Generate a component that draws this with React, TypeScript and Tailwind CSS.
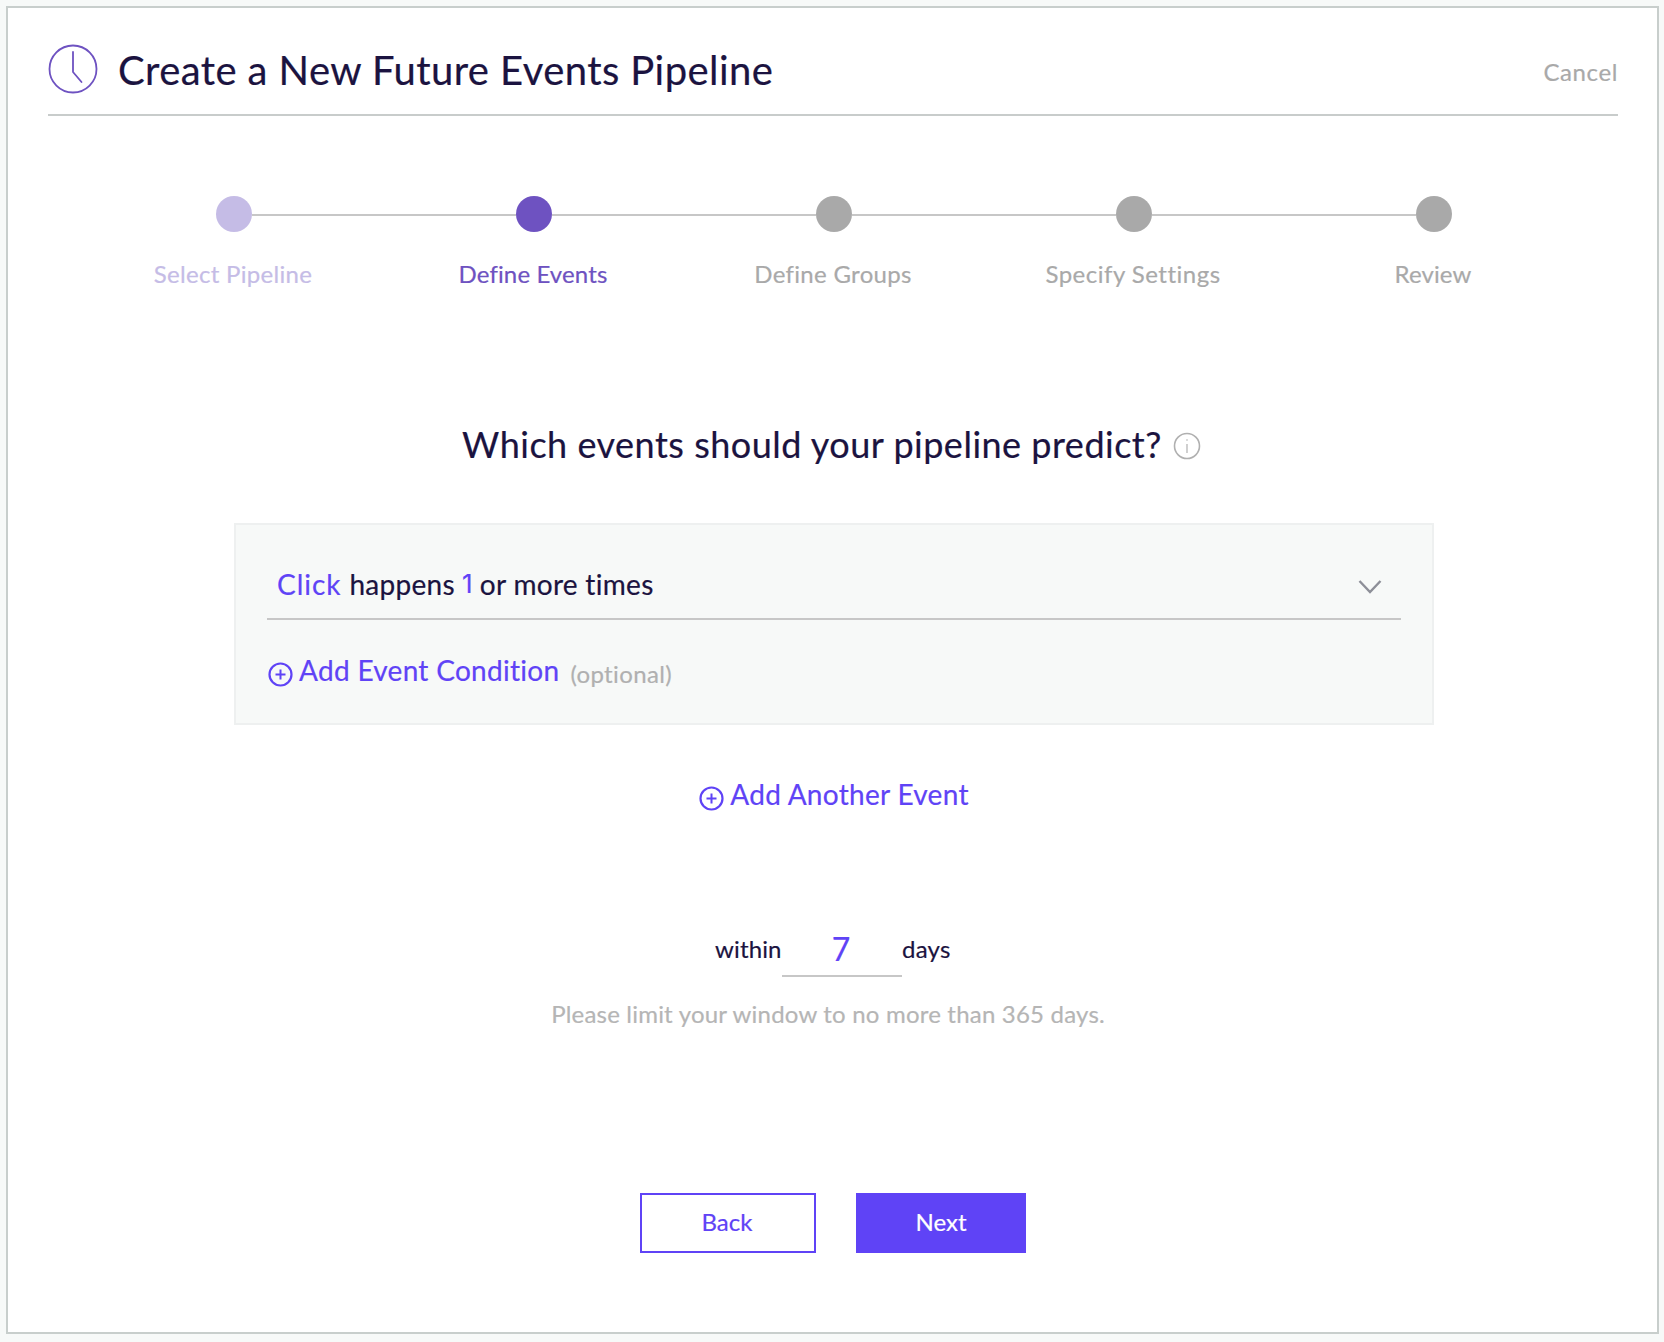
import React from "react";

function PlusCircle() {
  return (
    <svg width="25" height="25" viewBox="0 0 25 25" fill="none" stroke="#5f43f6" strokeWidth="2.2" className="shrink-0">
      <circle cx="12.5" cy="12.5" r="11" />
      <path d="M12.5 7.5v10M7.5 12.5h10" strokeWidth="2" />
    </svg>
  );
}

const steps = [
  { label: "Select Pipeline", dot: "bg-[#c5bce6]", text: "text-[#c5bce6] tracking-[0.3px]" },
  { label: "Define Events", dot: "bg-[#6e52c1]", text: "text-[#6e52c1] tracking-[0.12px]" },
  { label: "Define Groups", dot: "bg-[#a9a9a9]", text: "text-[#a9a9a9] tracking-[0.3px]" },
  { label: "Specify Settings", dot: "bg-[#a9a9a9]", text: "text-[#a9a9a9] tracking-[0.5px]" },
  { label: "Review", dot: "bg-[#a9a9a9]", text: "text-[#a9a9a9] tracking-[0.1px]" },
];

export default function App() {
  return (
    <div className="w-[1664px] h-[1342px] bg-[#f7f9f8] pt-[6px] pl-[6px] pr-[5px] pb-[8px] font-['Lato','Liberation_Sans',sans-serif] [-webkit-text-stroke:0.2px] overflow-hidden">
      <div className="h-full border-2 border-[#c8cecc] bg-white px-[40px] flex flex-col">
        <header className="h-[108px] -mr-[1px] border-b-2 border-[#c8cccb] flex items-start">
          <svg width="50" height="50" viewBox="0 0 50 50" fill="none" stroke="#6e52c1" strokeWidth="1.8" className="mt-[36px] shrink-0">
            <circle cx="25" cy="25" r="23.5" />
            <path d="M25 8v20l8.5 10" strokeLinecap="round" strokeLinejoin="round" />
          </svg>
          <h1 className="ml-[20px] mt-[38px] text-[40px] leading-[48px] text-[#1b1340] tracking-[0.42px] font-normal">Create a New Future Events Pipeline</h1>
          <button className="ml-auto mt-[48px] text-[24px] leading-[32px] text-[#a9a9a9] tracking-[0.6px]">Cancel</button>
        </header>

        <div className="ml-[36px] mt-[80px] w-[1500px]">
          <div className="flex items-center pl-[132px]">
            {steps.map((s, i) => (
              <React.Fragment key={s.label}>
                <span className={`w-[36px] h-[36px] rounded-full shrink-0 ${s.dot}`} />
                {i < 4 && <span className="w-[264px] h-[2px] mt-[2px] bg-[#c7c7c7] shrink-0" />}
              </React.Fragment>
            ))}
          </div>
          <div className="flex mt-[26px] -ml-[1px]">
            {steps.map((s) => (
              <div key={s.label} className={`w-[300px] text-center text-[24px] leading-[32px] ${s.text}`}>{s.label}</div>
            ))}
          </div>
        </div>

        <div className="mt-[130px] flex items-center justify-center mr-[2px] h-[48px]">
          <h2 className="text-[36px] leading-[48px] text-[#1b1340] font-normal tracking-[0.5px]">Which events should your pipeline predict?</h2>
          <svg width="28" height="28" viewBox="0 0 28 28" fill="none" stroke="#b0b0b0" className="ml-[11px] mt-[4px] shrink-0">
            <circle cx="14" cy="14" r="12.5" strokeWidth="1.6" />
            <path d="M14 12v9" strokeWidth="1.2" />
            <circle cx="14" cy="8" r="0.8" fill="#b0b0b0" stroke="none" />
          </svg>
        </div>

        <section className="ml-[186px] mt-[55px] w-[1200px] h-[202px] border-2 border-[#eef0f0] bg-[#f7f9f8] px-[31px] flex flex-col">
          <div className="h-[95px] border-b-2 border-[#c7c7c7] flex items-end pb-[16px] pl-[10px] pr-[19px] text-[28px] leading-[36px] text-[#1b1340] tracking-[0.3px]">
            <span className="text-[#5f43f6] tracking-[0.95px]">Click</span>
            <span className="ml-[8px]">happens</span>
            <span className="ml-[7px] text-[#5f43f6] font-['Inter','Lato',sans-serif] text-[26px]">1</span>
            <span className="ml-[7px]">or more times</span>
            <svg width="24" height="15" viewBox="0 0 24 15" fill="none" stroke="#8d8f98" strokeWidth="2.4" className="ml-auto mb-[8px]">
              <path d="M1.5 2l10.5 11L22.5 2" />
            </svg>
          </div>
          <div className="flex items-center mt-[32px] h-[36px]">
            <span className="mt-[8px] ml-[1px]"><PlusCircle /></span>
            <span className="ml-[6px] text-[28px] leading-[36px] text-[#5f43f6] tracking-[0.3px]">Add Event Condition</span>
            <span className="ml-[11px] mt-[7px] text-[24px] leading-[32px] text-[#b0b0b0] tracking-[0.35px]">(optional)</span>
          </div>
        </section>

        <div className="flex items-center justify-center mt-[51px] h-[36px] ml-[3px]">
          <span className="mt-[8px]"><PlusCircle /></span>
          <span className="ml-[6px] text-[28px] leading-[36px] text-[#5f43f6] tracking-[0.3px]">Add Another Event</span>
        </div>

        <div className="flex items-start ml-[667px] mt-[119px] text-[24px] text-[#1b1340]">
          <span className="w-[67px] leading-[32px] mt-[2px] tracking-[0.15px]">within</span>
          <span className="w-[120px] h-[46px] border-b-2 border-[#c7c7c7] pr-[2px] text-center text-[#5f43f6] text-[32px] leading-[35px]">7</span>
          <span className="leading-[32px] mt-[2px] tracking-[0.25px]">days</span>
        </div>

        <p className="ml-[-9px] mt-[21px] text-center text-[24px] leading-[32px] text-[#b5b5b5] tracking-[0.2px]">Please limit your window to no more than 365 days.</p>

        <div className="flex ml-[592px] mt-[163px] gap-[40px]">
          <button className="w-[176px] h-[60px] border-2 border-[#5f43f6] text-[#5f43f6] text-[24px] bg-white pr-[2px] pb-[2px]">Back</button>
          <button className="w-[170px] h-[60px] bg-[#5f43f6] text-white text-[24px] pb-[2px]">Next</button>
        </div>
      </div>
    </div>
  );
}
